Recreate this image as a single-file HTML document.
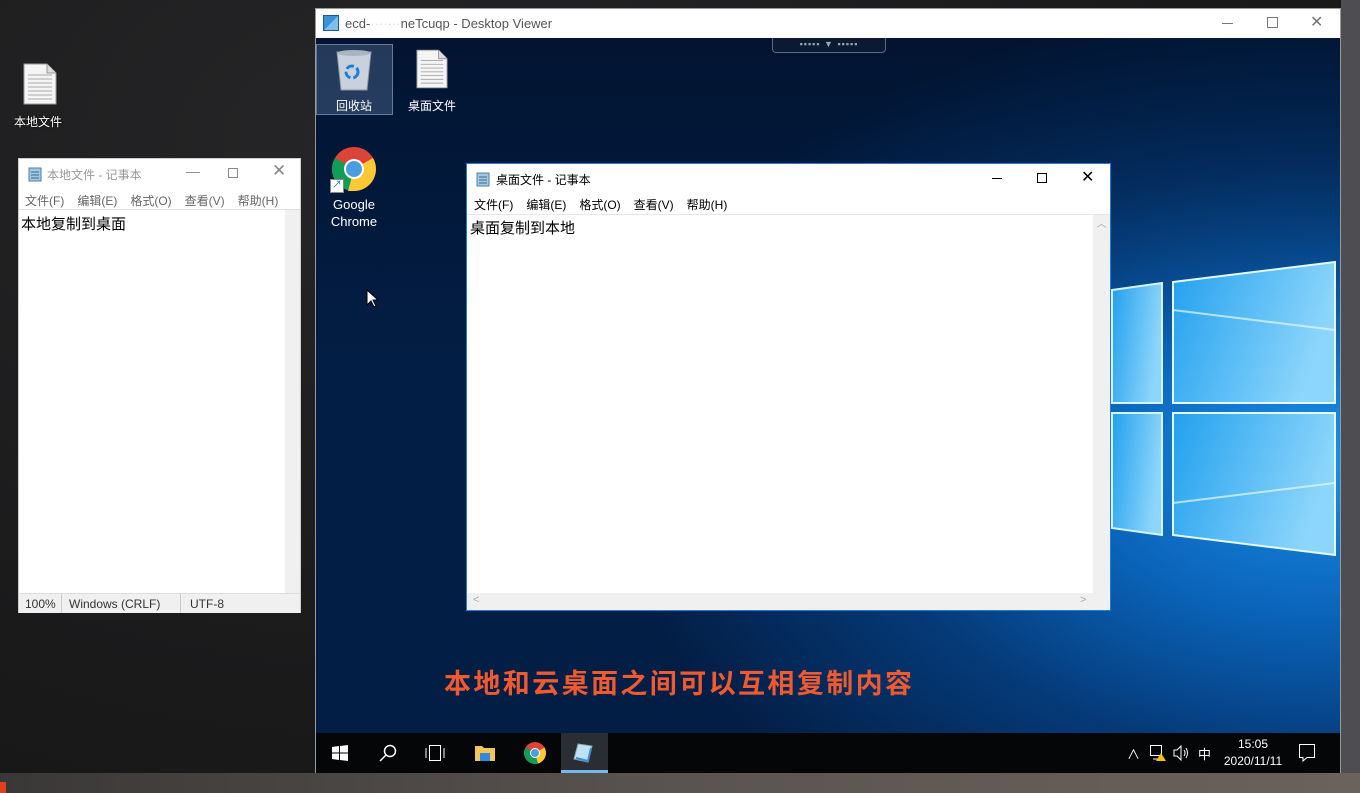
<!DOCTYPE html>
<html><head><meta charset="utf-8"><style>
*{margin:0;padding:0;box-sizing:border-box}
body{width:1360px;height:793px;overflow:hidden;position:relative;font-family:"Liberation Sans","Noto Sans CJK SC",sans-serif;background:#1d1d1e}
.abs{position:absolute}
.np{background:#fff;position:absolute}
.menu span{margin-right:13px}
</style></head><body>
<div class="abs" style="left:0;top:0;width:1360px;height:793px;background:radial-gradient(ellipse at 400px 150px,#262628 0,#1a1a1b 60%,#151515 100%)"></div>
<div class="abs" style="left:1341px;top:0;width:19px;height:793px;background:#4d4d52"></div>
<div class="abs" style="left:0;top:773px;width:1360px;height:20px;background:linear-gradient(90deg,#3a3837,#5a5450 50%,#6a625c)"></div>
<div class="abs" style="left:0;top:782px;width:6px;height:11px;background:#e04020"></div>

<svg class="abs" style="left:23px;top:63px" width="34" height="42" viewBox="0 0 34 42"><path d="M1 1H24L33 10V41H1Z" fill="#f4f4f4" stroke="#999"/><path d="M24 1V10H33" fill="#ddd" stroke="#999"/><g stroke="#aaa"><path d="M5 12H29M5 16H29M5 20H29M5 24H29M5 28H29M5 32H29M5 36H29"/></g></svg>
<div class="abs" style="left:14px;top:113px;font-size:12px;color:#fff;text-shadow:0 0 2px #000">本地文件</div>

<div class="np" style="left:18px;top:158px;width:283px;height:455px;border:1px solid #ccc">
 <svg class="abs" style="left:8px;top:7px" width="16" height="16" viewBox="0 0 16 16"><rect x="2" y="2" width="12" height="13" fill="#9ec9e8" stroke="#5a7e9a"/><path d="M4 6H12M4 9H12M4 12H12" stroke="#3c6a8a"/></svg>
 <div class="abs" style="left:28px;top:7px;font-size:12px;color:#999">本地文件 - 记事本</div>
 <div class="abs" style="left:167px;top:4px;font-size:14px;color:#888">—</div>
 <div class="abs" style="left:209px;top:9px;width:10px;height:10px;border:1px solid #888"></div>
 <div class="abs" style="left:253px;top:2px;font-size:17px;color:#888">✕</div>
 <div class="abs menu" style="left:6px;top:33px;font-size:12px;color:#666;white-space:nowrap"><span>文件(F)</span><span>编辑(E)</span><span>格式(O)</span><span>查看(V)</span><span>帮助(H)</span></div>
 <div class="abs" style="left:0;top:50px;width:281px;height:384px;border-top:1px solid #e0e0e0"></div>
 <div class="abs" style="left:2px;top:54px;font-size:15px;color:#000">本地复制到桌面</div>
 <div class="abs" style="left:266px;top:51px;width:15px;height:383px;background:#f0f0f0"></div>
 <div class="abs" style="left:0;top:434px;width:281px;height:20px;background:#f0f0f0;border-top:1px solid #ddd;font-size:12px;color:#333">
  <span class="abs" style="left:6px;top:3px">100%</span>
  <span class="abs" style="left:42px;top:0;width:1px;height:19px;background:#ccc"></span>
  <span class="abs" style="left:50px;top:3px">Windows (CRLF)</span>
  <span class="abs" style="left:161px;top:0;width:1px;height:19px;background:#ccc"></span>
  <span class="abs" style="left:171px;top:3px">UTF-8</span>
 </div>
</div>

<div class="abs" style="left:315px;top:8px;width:1026px;height:765px;background:#fff;border:1px solid #999"></div>
<svg class="abs" style="left:323px;top:15px" width="16" height="16"><rect x="0.5" y="0.5" width="15" height="15" fill="#3d8fd6" stroke="#1c5a96"/><path d="M1 15L15 1V15Z" fill="#7fbef0"/></svg>
<div class="abs" style="left:345px;top:16px;font-size:13px;color:#555">ecd-<span style="color:#ddd">·······</span>neTcuqp - Desktop Viewer</div>
<div class="abs" style="left:1222px;top:23px;width:11px;height:1px;background:#777"></div>
<div class="abs" style="left:1267px;top:17px;width:11px;height:11px;border:1px solid #777"></div>
<div class="abs" style="left:1310px;top:12px;font-size:16px;color:#777">✕</div>

<div class="abs" style="left:316px;top:38px;width:1024px;height:695px;overflow:hidden;background:radial-gradient(ellipse 720px 460px at 1010px 420px,#1a8ee8 0,#0a63b8 35%,#053a78 65%,#031e45 100%)">
 <div class="abs" style="left:0;top:0;width:1024px;height:695px;background:linear-gradient(180deg,rgba(0,10,30,.5),rgba(0,0,0,0) 50%)"></div>
 <svg class="abs" style="left:0;top:0" width="1024" height="695" viewBox="0 0 1024 695">
  <defs><linearGradient id="g" x1="0" x2="1" y1="0" y2="0.3"><stop offset="0" stop-color="#22a0ee"/><stop offset="1" stop-color="#8dd6fb"/></linearGradient></defs>
  <path d="M796 252 L846 245 L846 365 L796 365Z" fill="url(#g)" stroke="#d6f3ff" stroke-width="2"/>
  <path d="M857 244 L1019 224 L1019 365 L857 365Z" fill="url(#g)" stroke="#e6f8ff" stroke-width="2"/>
  <path d="M796 375 L846 375 L846 497 L796 490Z" fill="url(#g)" stroke="#d6f3ff" stroke-width="2"/>
  <path d="M857 375 L1019 375 L1019 517 L857 497Z" fill="url(#g)" stroke="#e6f8ff" stroke-width="2"/>
  <path d="M857 272 L1019 292 M857 465 L1019 445" stroke="#e6f8ff" stroke-width="2" opacity=".7"/>
 </svg>
 <div class="abs" style="left:456px;top:0;width:114px;height:15px;background:#0b1a33;border:1px solid #5a6a80;border-top:none;border-radius:0 0 4px 4px;color:#9aa;font-size:9px;text-align:center;line-height:12px;letter-spacing:1px">▪▪▪▪▪ ▼ ▪▪▪▪▪</div>
 <div class="abs" style="left:0;top:6px;width:77px;height:71px;background:rgba(120,150,190,.3);border:1px solid rgba(160,190,220,.5)"></div>
 <svg class="abs" style="left:18px;top:10px" width="40" height="44" viewBox="0 0 40 44"><path d="M3 4H37L33 42H7Z" fill="#c9d2dc" stroke="#8894a0"/><ellipse cx="20" cy="5" rx="17" ry="3" fill="#a8b4c0"/><circle cx="18" cy="24" r="6" fill="none" stroke="#1e7fd8" stroke-width="3" stroke-dasharray="8 3"/></svg>
 <div class="abs" style="left:20px;top:59px;font-size:12px;color:#fff">回收站</div>
 <svg class="abs" style="left:100px;top:10px" width="32" height="42" viewBox="0 0 34 42"><path d="M1 1H24L33 10V41H1Z" fill="#f4f4f4" stroke="#999"/><path d="M24 1V10H33" fill="#ddd" stroke="#999"/><g stroke="#aaa"><path d="M5 12H29M5 16H29M5 20H29M5 24H29M5 28H29M5 32H29M5 36H29"/></g></svg>
 <div class="abs" style="left:92px;top:59px;font-size:12px;color:#fff">桌面文件</div>
 <svg class="abs" style="left:15px;top:108px" width="46" height="46" viewBox="-23 -23 46 46"><circle r="22" fill="#db4437"/><path d="M0 0L-19 11A22 22 0 0 1 -19 -11Z" fill="#0f9d58"/><path d="M0 0L-19 11A22 22 0 0 0 19 11Z" fill="#0f9d58"/><path d="M0 0L19 -11A22 22 0 0 1 0 22L-6 22Z" fill="#fcc934"/><circle r="10" fill="#fff"/><circle r="8" fill="#4a9ee0"/></svg>
 <div class="abs" style="left:14px;top:141px;width:14px;height:14px;background:#fff;border:1px solid #888;font-size:10px;color:#1b6fcf;text-align:center;line-height:12px">↗</div>
 <div class="abs" style="left:0;top:158px;width:76px;text-align:center;font-size:13px;color:#fff;line-height:17px">Google<br>Chrome</div>
 <svg class="abs" style="left:50px;top:251px" width="12" height="19"><path d="M1 1V16L5 12L8 18L10 17L7 11H12Z" fill="#fff" stroke="#000"/></svg>
 <div class="abs" style="left:128px;top:624px;font-size:27px;font-weight:bold;color:#f05a30;letter-spacing:2.4px;white-space:nowrap;font-family:'Noto Sans CJK SC',sans-serif">本地和云桌面之间可以互相复制内容</div>
</div>

<div class="np" style="left:466px;top:163px;width:645px;height:448px;border:1px solid #1f7fd8">
 <svg class="abs" style="left:8px;top:7px" width="16" height="16" viewBox="0 0 16 16"><rect x="2" y="2" width="12" height="13" fill="#9ec9e8" stroke="#5a7e9a"/><path d="M4 6H12M4 9H12M4 12H12" stroke="#3c6a8a"/></svg>
 <div class="abs" style="left:29px;top:7px;font-size:12px;color:#000">桌面文件 - 记事本</div>
 <div class="abs" style="left:525px;top:14px;width:10px;height:1px;background:#000"></div>
 <div class="abs" style="left:570px;top:9px;width:10px;height:10px;border:1px solid #000"></div>
 <div class="abs" style="left:614px;top:3px;font-size:16px;color:#000">✕</div>
 <div class="abs menu" style="left:7px;top:32px;font-size:12px;color:#000;white-space:nowrap"><span>文件(F)</span><span>编辑(E)</span><span>格式(O)</span><span>查看(V)</span><span>帮助(H)</span></div>
 <div class="abs" style="left:0;top:50px;width:643px;height:1px;background:#e6e6e6"></div>
 <div class="abs" style="left:3px;top:53px;font-size:15px;color:#000">桌面复制到本地</div>
 <div class="abs" style="left:626px;top:51px;width:17px;height:378px;background:#f0f0f0;color:#aaa;font-size:10px;text-align:center">︿</div>
 <div class="abs" style="left:0;top:429px;width:643px;height:17px;background:#f0f0f0;color:#aaa;font-size:11px"><span class="abs" style="left:6px;top:1px">&lt;</span><span class="abs" style="left:613px;top:1px">&gt;</span></div>
</div>

<div class="abs" style="left:316px;top:733px;width:1024px;height:40px;background:#050608;color:#fff">
 <svg class="abs" style="left:16px;top:12px" width="16" height="16"><path d="M0 2L7 1V7.5H0ZM8 1L16 0V7.5H8ZM0 8.5H7V15L0 14ZM8 8.5H16V16L8 15Z" fill="#fff"/></svg>
 <svg class="abs" style="left:63px;top:11px" width="18" height="18"><circle cx="11" cy="7" r="5.5" fill="none" stroke="#fff" stroke-width="1.5"/><path d="M7 11L1 17" stroke="#fff" stroke-width="1.5"/></svg>
 <svg class="abs" style="left:109px;top:12px" width="20" height="16"><rect x="4.5" y="0.5" width="11" height="15" fill="none" stroke="#fff"/><path d="M1 3V13M19 3V13" stroke="#fff"/></svg>
 <svg class="abs" style="left:158px;top:11px" width="22" height="18"><path d="M1 2H8L10 4H21V17H1Z" fill="#f3c55a"/><rect x="6" y="9" width="10" height="8" fill="#2f8ae0"/></svg>
 <svg class="abs" style="left:208px;top:9px" width="22" height="22" viewBox="-11 -11 22 22"><circle r="11" fill="#db4437"/><path d="M0 0L-9.5 5.5A11 11 0 0 1 -9.5 -5.5Z" fill="#0f9d58"/><path d="M0 0L-9.5 5.5A11 11 0 0 0 3 10.5Z" fill="#0f9d58"/><path d="M0 0L9.5 -5.5A11 11 0 0 1 3 10.5Z" fill="#fcc934"/><circle r="5" fill="#fff"/><circle r="4" fill="#4a9ee0"/></svg>
 <div class="abs" style="left:245px;top:0;width:47px;height:40px;background:#2a2d33"></div>
 <div class="abs" style="left:245px;top:37px;width:47px;height:3px;background:#76b9ed"></div>
 <svg class="abs" style="left:256px;top:9px" width="24" height="22"><path d="M6 2L20 4L16 20L2 17Z" fill="#bfe3f5" stroke="#8aa"/><path d="M4 16L16 19L19 6" fill="none" stroke="#3a8fd0" stroke-width="2"/></svg>
 <div class="abs" style="left:811px;top:11px;font-size:13px">∧</div>
 <svg class="abs" style="left:833px;top:11px" width="18" height="18"><rect x="1.5" y="1.5" width="11" height="10" fill="none" stroke="#fff"/><path d="M4 15H10" stroke="#fff"/><path d="M12 9L17 17H7Z" fill="#f4c20d"/></svg>
 <svg class="abs" style="left:857px;top:12px" width="18" height="16"><path d="M1 5H4L8 1V15L4 11H1Z" fill="none" stroke="#fff"/><path d="M11 5Q13 8 11 11M13 3Q16 8 13 13" fill="none" stroke="#fff"/></svg>
 <div class="abs" style="left:882px;top:11px;font-size:13px">中</div>
 <div class="abs" style="left:902px;top:3px;width:70px;text-align:center;font-size:12px;line-height:17px">15:05<br>2020/11/11</div>
 <svg class="abs" style="left:982px;top:10px" width="18" height="20"><path d="M1.5 1.5H16.5V14.5H9L5 18V14.5H1.5Z" fill="none" stroke="#fff"/></svg>
</div>
</body></html>
